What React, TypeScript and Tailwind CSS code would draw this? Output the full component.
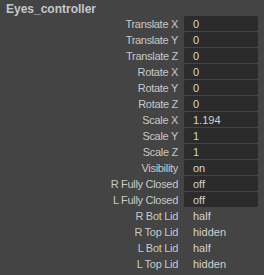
const rows: { label: string; value: string; field: boolean }[] = [
  { label: "Translate X", value: "0", field: true },
  { label: "Translate Y", value: "0", field: true },
  { label: "Translate Z", value: "0", field: true },
  { label: "Rotate X", value: "0", field: true },
  { label: "Rotate Y", value: "0", field: true },
  { label: "Rotate Z", value: "0", field: true },
  { label: "Scale X", value: "1.194", field: true },
  { label: "Scale Y", value: "1", field: true },
  { label: "Scale Z", value: "1", field: true },
  { label: "Visibility", value: "on", field: true },
  { label: "R Fully Closed", value: "off", field: true },
  { label: "L Fully Closed", value: "off", field: true },
  { label: "R Bot Lid", value: "half", field: false },
  { label: "R Top Lid", value: "hidden", field: false },
  { label: "L Bot Lid", value: "half", field: false },
  { label: "L Top Lid", value: "hidden", field: false },
];

export default function App() {
  return (
    <div
      className="w-[264px] h-[275px] bg-[#444444] text-[#c8c8c8] overflow-hidden"
      style={{ fontFamily: '"Liberation Sans", Arial, sans-serif' }}
    >
      <div className="pl-[6px] pt-[2px] h-[16px] text-[12px] leading-[14px] font-bold text-[#c4c8cc]">
        Eyes_controller
      </div>
      <div className="flex flex-col">
        {rows.map((r) => (
          <div key={r.label} className="flex items-center h-[15px] mb-[1px]">
            <div className="w-[178px] text-right text-[11px] leading-[15px] pt-[1px] tracking-[-0.3px]">
              {r.label}
            </div>
            <div
              className={
                "ml-[6px] w-[74px] h-[15px] rounded-[2px] pl-[9px] text-[11px] leading-[15px] pt-[1px] text-[#d2d2d2] " +
                (r.field ? "bg-[#2b2b2b]" : "")
              }
            >
              {r.value}
            </div>
          </div>
        ))}
      </div>
    </div>
  );
}
